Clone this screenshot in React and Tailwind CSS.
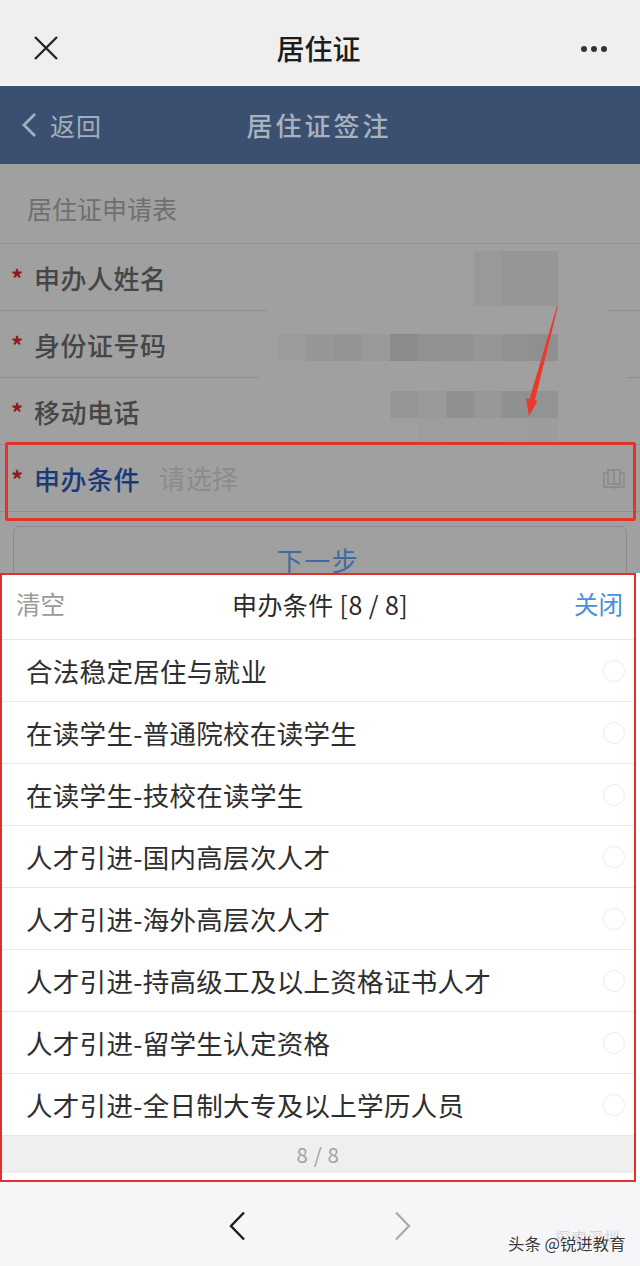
const font = { fontFamily: '"Noto Sans CJK SC", "Noto Sans", sans-serif' };

const items = [
  "合法稳定居住与就业",
  "在读学生-普通院校在读学生",
  "在读学生-技校在读学生",
  "人才引进-国内高层次人才",
  "人才引进-海外高层次人才",
  "人才引进-持高级工及以上资格证书人才",
  "人才引进-留学生认定资格",
  "人才引进-全日制大专及以上学历人员",
];

function Mosaic({ colors, className }) {
  return (
    <div className={`flex ${className}`}>
      {colors.map((c, i) => (
        <div key={i} className="w-[28px] h-full" style={{ backgroundColor: c }} />
      ))}
    </div>
  );
}

function Row({ label, children, active, gap }) {
  return (
    <div className="relative flex items-center h-[67px] pl-[11px] pt-[1px] border-b border-[#8f8f8f]">
      <span className="w-[23px] h-full flex items-center text-[#8e1c1c] text-[24px] font-bold leading-none">*</span>
      <span className={`text-[26px] tracking-[0.5px] font-medium leading-none ${active ? "text-[#1b3a78]" : "text-[#464646]"}`}>{label}</span>
      {children}
      {gap}
    </div>
  );
}

export default function App() {
  return (
    <div className="relative w-[640px] h-[1266px] overflow-hidden bg-[#f6f6f8]" style={font}>
      {/* WeChat title bar */}
      <div className="h-[86px] bg-[#efefef] border-b border-[#f8f8f8] flex items-center pt-[11px]">
        <div className="w-[100px] pl-[34px]">
          <svg className="block" width="24" height="24" viewBox="0 0 24 24" fill="none" stroke="#222" strokeWidth="2.3">
            <path d="M1 1 L23 23 M23 1 L1 23" />
          </svg>
        </div>
        <span className="flex-1 text-center pr-[3px] text-[28px] font-medium text-[#1c1c1c] leading-none">居住证</span>
        <div className="w-[100px] pr-[33px] flex justify-end gap-[4px] mt-[2px]">
          <span className="w-[6px] h-[6px] rounded-full bg-[#333]" />
          <span className="w-[6px] h-[6px] rounded-full bg-[#333]" />
          <span className="w-[6px] h-[6px] rounded-full bg-[#333]" />
        </div>
      </div>

      {/* blue header */}
      <div className="h-[78px] bg-[#3b5070] flex items-center justify-center relative">
        <div className="absolute left-[21px] top-0 h-full flex items-center gap-[13px]">
          <svg width="16" height="26" viewBox="0 0 16 26" fill="none" stroke="#a3aebd" strokeWidth="2.8">
            <path d="M14 2 L3 13 L14 24" />
          </svg>
          <span className="text-[25px] text-[#a3aebd] leading-none tracking-[1px]">返回</span>
        </div>
        <span className="text-[26px] text-[#a9b2bf] font-medium tracking-[3px] leading-none pr-[2px]">居住证签注</span>
      </div>

      {/* dimmed form */}
      <div className="h-[409px] bg-[#a1a0a0] overflow-hidden">
        <div className="h-[80px] flex items-center pl-[27px] pt-[10px] border-b border-[#8f8f8f]">
          <span className="text-[25px] text-[#6f6f6f] leading-none">居住证申请表</span>
        </div>
        <Row
          label="申办人姓名"
          gap={<span className="absolute left-[267px] w-[341px] bottom-[-1px] h-[1px] bg-[#a1a0a0]" />}
        >
          <Mosaic className="ml-auto mr-[82px] h-[55px] mb-[-1px]" colors={["#999999", "#959595", "#969696"]} />
        </Row>
        <Row
          label="身份证号码"
          gap={<span className="absolute left-[259px] w-[367px] bottom-[-1px] h-[1px] bg-[#a1a0a0]" />}
        >
          <Mosaic
            className="ml-auto mr-[82px] h-[27px] mt-[6px]"
            colors={["#9b9b9b", "#969696", "#949494", "#999999", "#8b8b8b", "#919191", "#929292", "#969696", "#919191", "#8f8f8f"]}
          />
        </Row>
        <Row label="移动电话">
          <div className="ml-auto mr-[82px] mt-[12px] flex flex-col">
            <Mosaic className="h-[27px]" colors={["#969696", "#999999", "#909090", "#979797", "#909090", "#939393"]} />
            <Mosaic className="h-[27px]" colors={["#9f9f9f", "#9d9d9d", "#9e9e9e", "#9e9e9e", "#9d9d9d", "#9c9c9c"]} />
          </div>
        </Row>
        <Row label="申办条件" active>
          <span className="ml-[19px] text-[26.4px] text-[#8b8b8b] leading-none">请选择</span>
          <svg className="ml-auto mr-[14px]" width="24" height="22" viewBox="0 0 24 22" fill="none" stroke="#868686" strokeWidth="1.5">
            <path d="M6 2 H12 V16 H6 Z M12 2 H18 V16 H12" />
            <path d="M6 5 H2 V19 H22 V5 H18 M12 19 V21.5" />
          </svg>
        </Row>
        <div className="mt-[14px] mx-[13px] h-[80px] border border-[#8c8c8c] rounded-[6px] flex justify-center pt-[20px]">
          <span className="text-[26px] text-[#3f6ba3] leading-none tracking-[1.5px] pr-[4px]">下一步</span>
        </div>
      </div>

      {/* sheet */}
      <div className="bg-white h-[609px] w-[640px] pr-[4px]">
        <div className="h-full border-2 border-[#e0312c] flex flex-col">
          <div className="h-[65px] shrink-0 flex items-center justify-between pl-[14px] pr-[11px] pb-[6px] border-b border-[#e8e8e8] relative">
            <span className="text-[24.5px] text-[#9a9a9a] leading-none">清空</span>
            <span className="absolute left-[230px] text-[25px] text-[#2b2b2b] leading-none tracking-[0.4px]">申办条件 [8 / 8]</span>
            <span className="text-[24.5px] text-[#4a8fdb] leading-none">关闭</span>
          </div>
          {items.map((t) => (
            <div key={t} className="h-[62px] shrink-0 flex items-center justify-between pl-[24px] pr-[9px] pt-[1px] border-b border-[#e8e8e8]">
              <span className="text-[26.5px] tracking-[0.3px] text-[#2e2e2e] leading-none">{t}</span>
              <span className="w-[22px] h-[22px] rounded-full border border-[#ececec]" />
            </div>
          ))}
          <div className="h-[37px] shrink-0 bg-[#efefef] flex items-center justify-center">
            <span className="text-[20.5px] text-[#a2a2a2] leading-none tracking-[0.6px]">8 / 8</span>
          </div>
        </div>
      </div>

      {/* browser nav */}
      <div className="h-[84px] flex justify-center pt-[29px] gap-[150px]">
        <svg width="16" height="30" viewBox="0 0 16 30" fill="none" stroke="#1c1c1c" strokeWidth="2.4">
          <path d="M15 1.5 L2 15 L15 28.5" />
        </svg>
        <svg width="16" height="30" viewBox="0 0 16 30" fill="none" stroke="#aeaeae" strokeWidth="2.4">
          <path d="M1 1.5 L14 15 L1 28.5" />
        </svg>
      </div>

      {/* annotations and watermark */}
      <div className="absolute left-[5px] top-[442px] w-[631px] h-[79px] border-[3px] border-[#e0342c] rounded-[2px]" />
      <svg className="absolute left-[520px] top-[300px]" width="45" height="120" viewBox="0 0 45 120" fill="#e8392e">
        <path d="M37 6 L38 6 L15 100 L17.5 101 L9 116 L6 98 L9.5 99 Z" />
      </svg>
      <span className="absolute left-[555px] top-[1229px] text-[15px] leading-none text-[#d4d4d8] tracking-[1.5px]">探索深圳</span>
      <span
        className="absolute left-[508px] top-[1235px] text-[16.4px] leading-none text-[#3a3a3a]"
        style={{ textShadow: "1px 1px 0 #fff, -1px 0 0 #fff" }}
      >
        头条 @锐进教育
      </span>
    </div>
  );
}
